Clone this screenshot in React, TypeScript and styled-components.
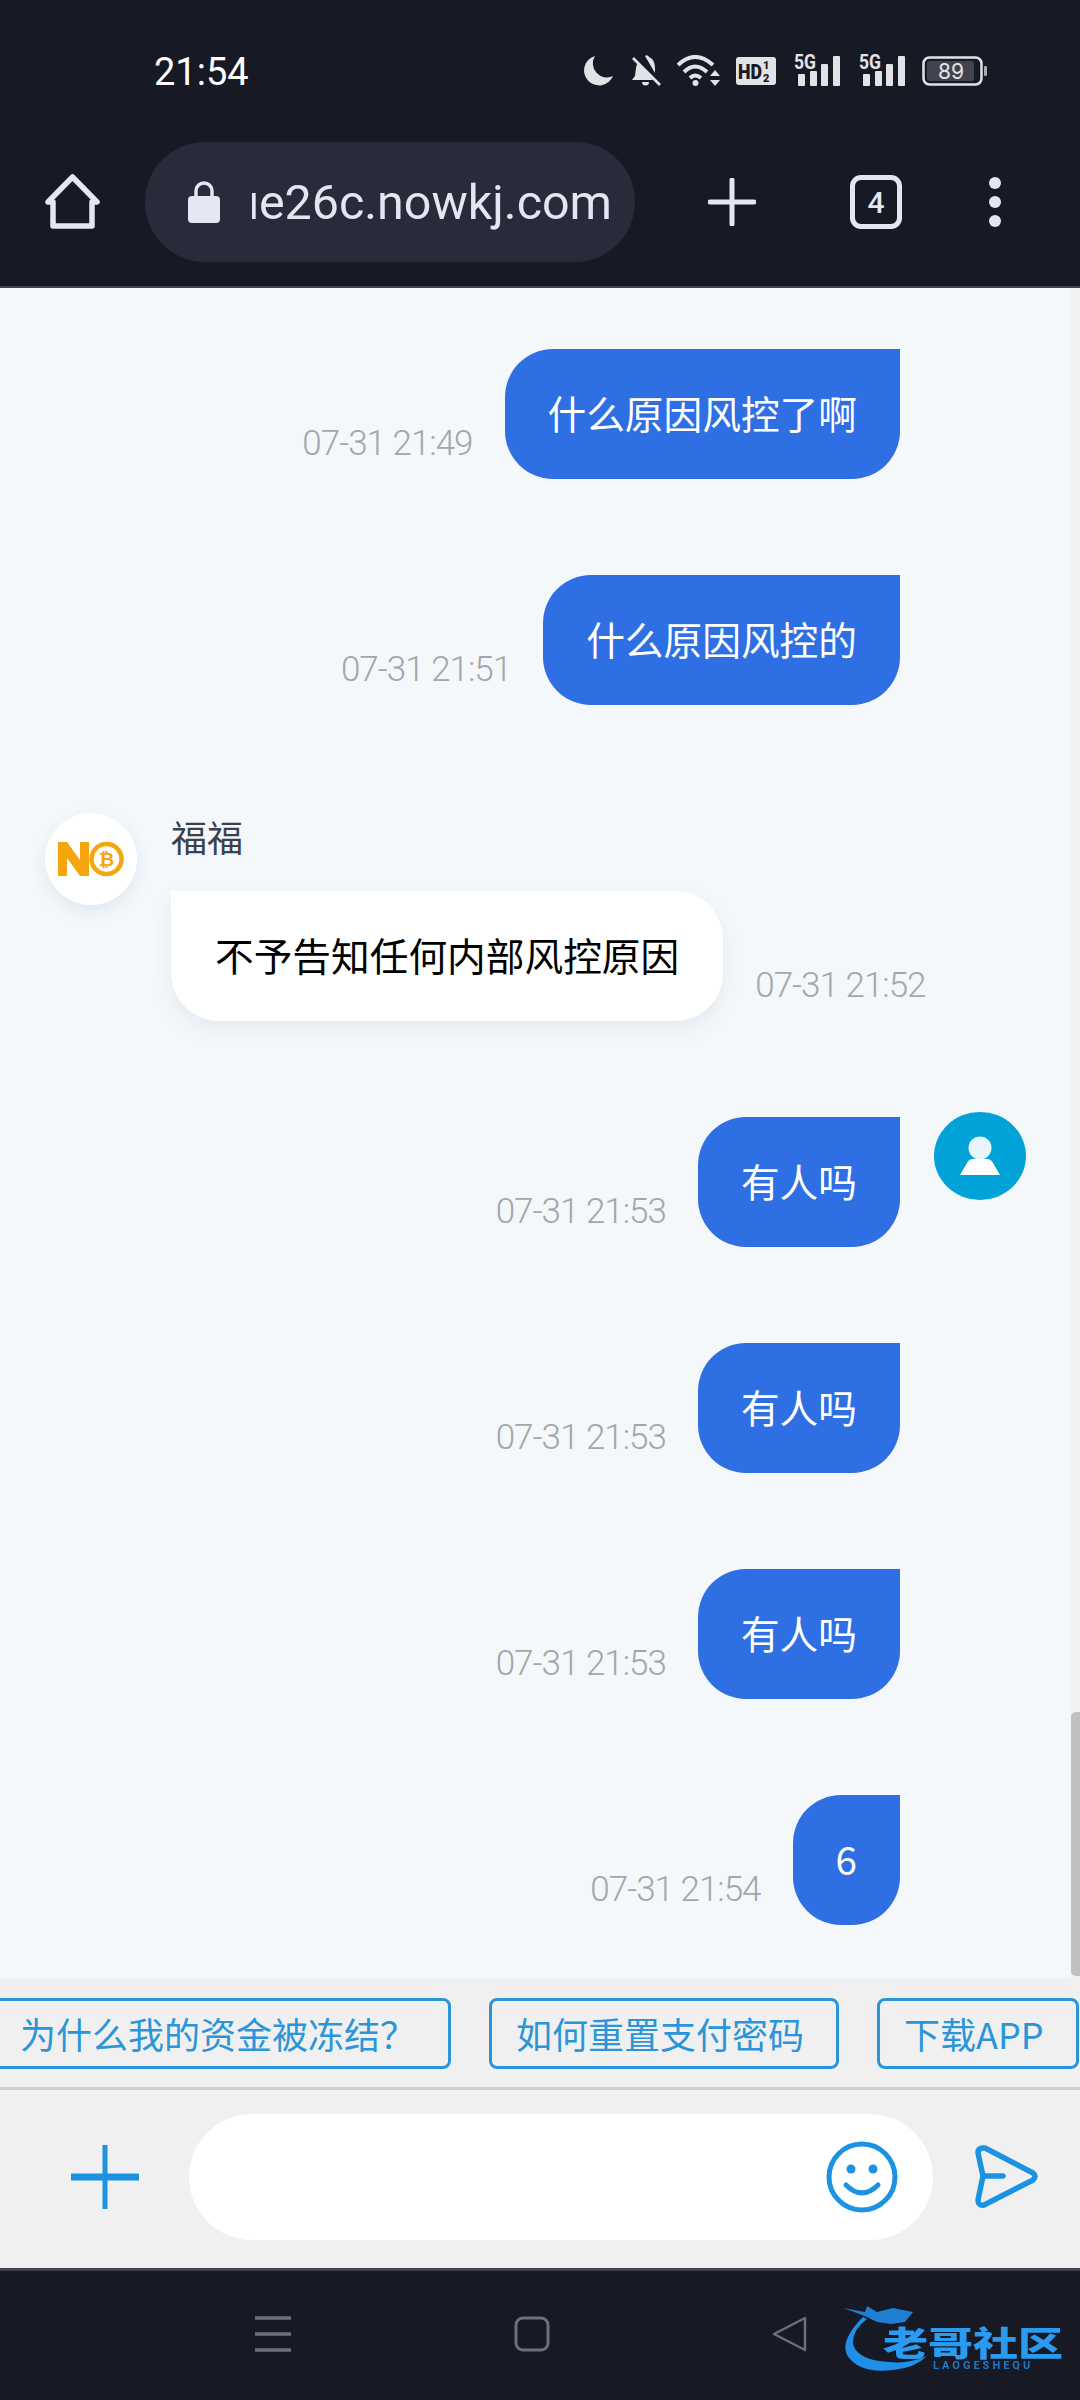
import React from 'react'
import styled, { createGlobalStyle } from 'styled-components'

const GlobalStyle = createGlobalStyle`
  html, body {
    margin: 0;
    padding: 0;
    background: #171a25;
  }
  * {
    box-sizing: border-box;
  }
`

const CJK = `"Noto Sans CJK SC", "Noto Sans", sans-serif`

const Page = styled.div`
  width: 1080px;
  height: 2400px;
  display: flex;
  flex-direction: column;
  overflow: hidden;
  font-family: ${CJK};
`

const Header = styled.header`
  height: 288px;
  flex: none;
  background: #171a25;
  border-bottom: 2px solid #41444f;
`

const StatusBar = styled.div`
  height: 142px;
  padding: 54px 92px 0 154px;
  display: flex;
  align-items: flex-start;
  justify-content: space-between;
`

const Clock = styled.span`
  font-family: Roboto, sans-serif;
  font-size: 38px;
  line-height: 36px;
  color: #fff;
`

const StatusIcons = styled.div`
  display: flex;
  align-items: center;
  height: 34px;
  gap: 18px;
`

const SignalSvg = styled.svg`
  overflow: visible;
`

const Toolbar = styled.div`
  height: 120px;
  display: flex;
  align-items: center;
  padding-left: 45px;
`

const ToolIcon = styled.svg<{ $left?: number }>`
  flex: none;
  margin-left: ${(props) => props.$left ?? 0}px;
  color: #e4e6f2;
`

const AddressPill = styled.div`
  width: 490px;
  height: 120px;
  margin-left: 45px;
  padding-left: 43px;
  flex: none;
  display: flex;
  align-items: center;
  background: #282c3a;
  border-radius: 60px;
`

const UrlClip = styled.div`
  width: 360px;
  margin-left: 32px;
  overflow: hidden;
  direction: rtl;
  white-space: nowrap;
`

const UrlText = styled.span`
  font-family: Roboto, sans-serif;
  font-size: 48.4px;
  color: #e4e6f2;
  unicode-bidi: plaintext;
`

const TabCount = styled.div`
  width: 52px;
  height: 54px;
  margin-left: 94px;
  flex: none;
  display: flex;
  align-items: center;
  justify-content: center;
  border: 5px solid #e4e6f2;
  border-radius: 11px;
  color: #e4e6f2;
  font-family: Roboto, sans-serif;
  font-size: 30px;
  font-weight: 500;
`

const Chat = styled.main`
  position: relative;
  flex: 1;
  min-height: 0;
  padding-top: 61px;
  background: #f4f8fb;
  overflow: hidden;
`

const OutRow = styled.div<{ $top?: number }>`
  display: flex;
  align-items: flex-start;
  justify-content: flex-end;
  margin-top: ${(props) => props.$top ?? 96}px;
  padding-right: 54px;
`

const InRow = styled.div`
  display: flex;
  align-items: flex-start;
  margin-top: 108px;
  padding-left: 45px;
`

const Bubble = styled.div`
  height: 130px;
  padding: 0 43px 5px;
  display: flex;
  align-items: center;
  font-size: 38.7px;
  color: #fff;
  background: #2e6fe3;
  border-radius: 48px 0 48px 48px;
`

const WhiteBubble = styled(Bubble)`
  padding: 0 44px 5px;
  color: #000;
  background: #fff;
  border-radius: 0 48px 48px 48px;
  box-shadow: 0 8px 20px rgba(60, 80, 110, 0.08);
`

const Time = styled.span<{ $left?: number; $right?: number }>`
  align-self: flex-end;
  margin: 0 ${(props) => props.$right ?? 0}px 16px ${(props) => props.$left ?? 0}px;
  font-family: Roboto, sans-serif;
  font-size: 35px;
  font-weight: 300;
  line-height: 38px;
  letter-spacing: -1px;
  color: #a3a6ab;
  white-space: nowrap;
`

const AvatarSlot = styled.div`
  width: 92px;
  margin-left: 34px;
  flex: none;
`

const UserAvatar = styled.div`
  width: 92px;
  height: 88px;
  margin-top: -5px;
  display: flex;
  align-items: center;
  justify-content: center;
  background: #00a2d8;
  border-radius: 50%;
`

const AgentAvatar = styled.div`
  width: 92px;
  height: 92px;
  flex: none;
  display: flex;
  align-items: center;
  justify-content: center;
  background: #fff;
  border-radius: 50%;
  box-shadow: 0 6px 16px rgba(60, 80, 110, 0.1);
`

const AgentBlock = styled.div`
  margin-left: 34px;
  display: flex;
  align-items: flex-end;
`

const AgentName = styled.div`
  height: 78px;
  font-size: 36px;
  line-height: 46px;
  color: #3b404b;
`

const ScrollTrack = styled.div`
  position: absolute;
  top: 0;
  right: 0;
  bottom: 0;
  width: 10px;
  padding: 1424px 0 2px 1px;
  background: #f1f2f3;
`

const ScrollThumb = styled.div`
  height: 100%;
  background: #c0c0c0;
  border-radius: 5px 0 0 5px;
`

const QuickBar = styled.div`
  height: 112px;
  flex: none;
  padding: 20px 0 0 0;
  display: flex;
  gap: 38px;
  background: #f0f0f0;
  border-bottom: 3px solid #cdcdcd;
  overflow: hidden;
`

const Chip = styled.div<{ $offset?: number }>`
  height: 71px;
  padding: 0 32px 1px 24px;
  flex: none;
  margin-left: ${(props) => props.$offset ?? 0}px;
  display: flex;
  align-items: center;
  font-size: 36px;
  color: #2b95d9;
  border: 3px solid #2b95d9;
  border-radius: 8px;
`

const InputBar = styled.div`
  height: 178px;
  flex: none;
  display: flex;
  align-items: center;
  padding: 0 0 4px 71px;
  background: #f0f0f0;
`

const AddIcon = styled.svg`
  flex: none;
`

const InputPill = styled.div`
  width: 744px;
  height: 126px;
  margin-left: 50px;
  padding-right: 35px;
  flex: none;
  display: flex;
  align-items: center;
  justify-content: flex-end;
  background: #fff;
  border-radius: 63px;
`

const SendIcon = styled.svg`
  margin-left: 42px;
  flex: none;
`

const NavBar = styled.nav`
  position: relative;
  height: 132px;
  flex: none;
  display: flex;
  align-items: flex-start;
  padding: 45px 0 0 255px;
  background: #171a25;
  border-top: 3px solid #41444f;
`

const NavIcon = styled.svg<{ $left?: number }>`
  flex: none;
  margin-left: ${(props) => props.$left ?? 0}px;
`

const Watermark = styled.div`
  position: absolute;
  left: 843px;
  top: 29px;
  width: 225px;
  height: 78px;
  filter: blur(0.6px);
`

const DragonMark = styled.svg`
  overflow: visible;
`

const WatermarkTitle = styled.span`
  position: absolute;
  left: 40px;
  top: 24px;
  font-size: 45px;
  line-height: 36px;
  font-weight: 900;
  color: #2a9bf0;
  white-space: nowrap;
  transform: scaleY(0.75);
`

const WatermarkSub = styled.span`
  position: absolute;
  left: 90px;
  top: 60px;
  font-family: Roboto, sans-serif;
  font-size: 11px;
  line-height: 12px;
  font-weight: 700;
  letter-spacing: 3px;
  color: #1f78c4;
`

const Outgoing = ({ text, time, top, avatar }: { text: string; time: string; top?: number; avatar?: boolean }) => (
  <OutRow $top={top}>
    <Time $right={32}>{time}</Time>
    <Bubble>{text}</Bubble>
    <AvatarSlot>
      {avatar && (
        <UserAvatar>
          <svg width="42" height="42" viewBox="0 0 42 42">
            <circle cx="21" cy="13" r="11.500" fill="#e8f6fb" />
            <path d="M1 40 L8 28 Q10 24 14 24 L28 24 Q32 24 34 28 L41 40 Z" fill="#fff" />
          </svg>
        </UserAvatar>
      )}
    </AvatarSlot>
  </OutRow>
)

function SignalIcon() {
  return (
    <SignalSvg width="47" height="30" viewBox="0 0 47 30" fill="#e2e3e6">
      <text x="0" y="13" fontFamily="Roboto, sans-serif" fontSize="21" fontWeight="700" textLength="22" lengthAdjust="spacingAndGlyphs">5G</text>
      <rect x="4" y="18" width="7" height="12" rx="1" />
      <rect x="16" y="15" width="7" height="15" rx="1" />
      <rect x="27" y="8" width="7" height="22" rx="1" />
      <rect x="39" y="0" width="7" height="30" rx="1" />
    </SignalSvg>
  )
}

export default function App() {
  return (
    <Page>
      <GlobalStyle />
      <Header>
        <StatusBar>
          <Clock>21:54</Clock>
          <StatusIcons>
            {/* moon */}
            <svg width="30" height="30" viewBox="0 0 30 30" fill="#e2e3e6">
              <path d="M12 0 A15 15 0 1 0 30 20 A14 14 0 0 1 12 0 Z" />
            </svg>
            {/* muted bell */}
            <svg width="30" height="32" viewBox="0 0 30 32" fill="#e2e3e6">
              <path d="M14 1 a2.5 2.5 0 0 1 4 1 C23 4 24 9 24 14 L24 18 Z M7 8 L22 25 L1 25 L4 21 L5 13 Q5 10 7 8 Z M11 27 h7 a3.5 3.5 0 0 1 -7 0 Z" />
              <path d="M2 3 L29 30" stroke="#e2e3e6" strokeWidth="2.6" />
            </svg>
            {/* wifi */}
            <svg width="44" height="32" viewBox="0 0 44 32" fill="none" stroke="#e2e3e6" strokeWidth="4" style={{ marginLeft: -2 }}>
              <path d="M1 10 Q18 -6 36 10" />
              <path d="M7 17 Q18 6 30 17" />
              <path d="M13 23 Q18 18 24 23" />
              <circle cx="18.500" cy="28" r="3" fill="#e2e3e6" stroke="none" />
              <path d="M33 21 l5 -6 l5 6 Z M33 25 l5 6 l5 -6 Z" fill="#e2e3e6" stroke="none" />
            </svg>
            {/* HD badge */}
            <svg width="40" height="28" viewBox="0 0 40 28" style={{ marginLeft: -3 }}>
              <rect width="40" height="28" rx="3" fill="#e2e3e6" />
              <text x="2" y="22" fontFamily="Roboto, sans-serif" fontSize="20" fontWeight="900" fill="#171a25" textLength="24" lengthAdjust="spacingAndGlyphs">HD</text>
              <text x="27" y="12" fontFamily="Roboto, sans-serif" fontSize="11" fontWeight="900" fill="#171a25">1</text>
              <text x="27" y="25" fontFamily="Roboto, sans-serif" fontSize="11" fontWeight="900" fill="#171a25">2</text>
            </svg>
            <SignalIcon />
            <SignalIcon />
            <svg width="66" height="30" viewBox="0 0 66 30" style={{ marginLeft: -2 }}>
              <rect x="1.500" y="1.500" width="58" height="27" rx="6" fill="none" stroke="#e2e3e6" strokeWidth="2.500" />
              <rect x="5" y="5" width="47" height="20" rx="2.500" fill="#41444f" />
              <rect x="62" y="10" width="3" height="10" rx="1" fill="#a9abb0" />
              <text x="16" y="23" fontFamily="Inter, sans-serif" fontSize="21" fill="#e2e3e6">89</text>
            </svg>
          </StatusIcons>
        </StatusBar>
        <Toolbar>
          <ToolIcon width="55" height="56" viewBox="0 0 55 56" fill="none" stroke="currentColor" strokeWidth="5.500" strokeLinejoin="round" strokeLinecap="round">
            <path d="M3 28 L27.500 3 L52 28 L47 28 L47 52 L8 52 L8 28 Z" />
          </ToolIcon>
          <AddressPill>
            <svg width="32" height="44" viewBox="0 0 32 44" fill="#e4e6f2">
              <path d="M8 18 V11 a8 8 0 0 1 16 0 V18" fill="none" stroke="#e4e6f2" strokeWidth="3.500" />
              <rect y="16" width="32" height="27" rx="4" />
            </svg>
            <UrlClip>
              <UrlText>ue26c.nowkj.com</UrlText>
            </UrlClip>
          </AddressPill>
          <ToolIcon $left={73} width="48" height="48" viewBox="0 0 48 48" fill="none" stroke="currentColor" strokeWidth="5" strokeLinecap="round">
            <path d="M24 2 V46 M2 24 H46" />
          </ToolIcon>
          <TabCount>4</TabCount>
          <ToolIcon $left={79} width="28" height="50" viewBox="0 0 28 50" fill="currentColor">
            <circle cx="14" cy="6" r="6" />
            <circle cx="14" cy="25" r="6" />
            <circle cx="14" cy="44" r="6" />
          </ToolIcon>
        </Toolbar>
      </Header>

      <Chat>
        <Outgoing top={0} text="什么原因风控了啊" time="07-31 21:49" />
        <Outgoing text="什么原因风控的" time="07-31 21:51" />
        <InRow>
          <AgentAvatar>
            <svg width="66" height="36" viewBox="0 0 66 36">
              <path d="M0 35 V1 H9 L22 19 V1 H31 V35 H22 L9 17 V35 Z" fill="#f5a60f" />
              <circle cx="48.500" cy="18" r="15" fill="none" stroke="#f5a60f" strokeWidth="4.500" />
              <text x="48.500" y="25" textAnchor="middle" fontFamily="Roboto, sans-serif" fontSize="19" fontWeight="700" fill="#f5a60f">₿</text>
            </svg>
          </AgentAvatar>
          <AgentBlock>
            <div>
              <AgentName>福福</AgentName>
              <WhiteBubble>不予告知任何内部风控原因</WhiteBubble>
            </div>
            <Time $left={32}>07-31 21:52</Time>
          </AgentBlock>
        </InRow>
        <Outgoing text="有人吗" time="07-31 21:53" avatar />
        <Outgoing text="有人吗" time="07-31 21:53" />
        <Outgoing text="有人吗" time="07-31 21:53" />
        <Outgoing text="6" time="07-31 21:54" />
        <ScrollTrack>
          <ScrollThumb />
        </ScrollTrack>
      </Chat>

      <QuickBar>
        <Chip $offset={-7}>为什么我的资金被冻结？</Chip>
        <Chip>如何重置支付密码</Chip>
        <Chip>下载APP</Chip>
      </QuickBar>

      <InputBar>
        <AddIcon width="68" height="64" viewBox="0 0 68 64" fill="none" stroke="#1c92e3">
          <path d="M34 0 V64" strokeWidth="5" />
          <path d="M0 32 H68" strokeWidth="7" />
        </AddIcon>
        <InputPill>
          <svg width="72" height="72" viewBox="0 0 72 72" fill="none" stroke="#1c92e3" strokeWidth="5">
            <circle cx="36" cy="36" r="33" />
            <circle cx="25" cy="28" r="4.500" fill="#1c92e3" stroke="none" />
            <circle cx="47" cy="28" r="4.500" fill="#1c92e3" stroke="none" />
            <path d="M20 44 Q36 60 52 44" strokeLinecap="round" />
          </svg>
        </InputPill>
        <SendIcon width="64" height="64" viewBox="0 0 64 64" fill="none" stroke="#1c92e3" strokeWidth="5.500" strokeLinejoin="round" strokeLinecap="round">
          <path d="M8 3 Q3 3 3 8 L8 31 L3 55 Q3 61 9 60 L58 35 Q62 31 58 28 L10 3 Q9 3 8 3 Z M8 31 H28" />
        </SendIcon>
      </InputBar>

      <NavBar>
        <NavIcon width="36" height="36" viewBox="0 0 36 36" stroke="#6d7078" strokeWidth="3.500">
          <path d="M0 2 H36 M0 18 H36 M0 34 H36" />
        </NavIcon>
        <NavIcon $left={223} width="36" height="36" viewBox="0 0 36 36" fill="none" stroke="#6d7078" strokeWidth="3">
          <rect x="2" y="2" width="32" height="32" rx="7" />
        </NavIcon>
        <NavIcon $left={222} width="36" height="36" viewBox="0 0 36 36" fill="none" stroke="#6d7078" strokeWidth="2.500" strokeLinejoin="round">
          <path d="M33 2 V34 L2 18 Z" />
        </NavIcon>
        <Watermark>
          <DragonMark width="90" height="78" viewBox="0 0 90 78">
            <path d="M20 17 Q-3 40 4 55 Q16 74 50 70 Q72 68 84 56 Q66 64 46 62 Q14 60 10 44 Q9 30 24 19 Z" fill="#1f8fe8" />
            <path d="M0 8 L22 12 L24 6 L34 12 L50 8 L70 12 L62 22 L48 24 L34 22 L26 18 L14 13 Z" fill="#1f7fd0" />
          </DragonMark>
          <WatermarkTitle>老哥社区</WatermarkTitle>
          <WatermarkSub>LAOGESHEQU</WatermarkSub>
        </Watermark>
      </NavBar>
    </Page>
  )
}
